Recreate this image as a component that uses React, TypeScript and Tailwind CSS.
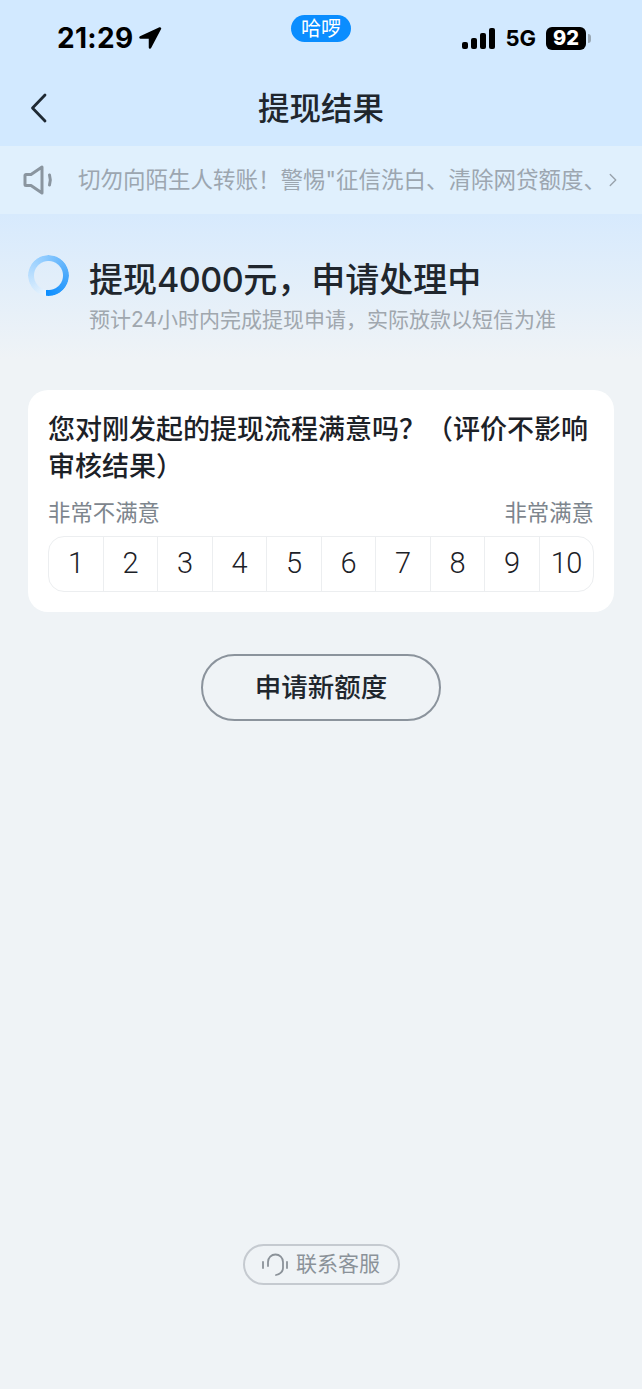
import { ChevronRight } from "lucide-react";

const SCORES = [1, 2, 3, 4, 5, 6, 7, 8, 9, 10];

const StatusBar = () => (
  <div className="grid h-[76px] grid-cols-3 px-[57px]">
    <div className="flex items-center gap-[6px] font-['Inter'] text-[28px] leading-none font-bold tracking-[0.3px] text-black">
      <span>21:29</span>
      <svg width="24" height="24" viewBox="0 0 24 24" className="-ml-[1px]">
        <path d="M22 2.5 2.5 11.5h9.5v10z" fill="#000" stroke="#000" strokeWidth="2.5" strokeLinejoin="round" />
      </svg>
    </div>
    <div className="flex justify-center pt-[15px]">
      <span className="flex h-[27px] w-[60px] items-center justify-center rounded-full bg-[#0a8dff] text-[20px] leading-none text-white">
        哈啰
      </span>
    </div>
    <div className="-mr-[6px] flex items-center justify-end">
      <svg width="33" height="21" viewBox="0 0 33 21" fill="#000">
        <rect x="0" y="14" width="6" height="7" rx="2" />
        <rect x="9" y="10" width="6" height="11" rx="2" />
        <rect x="18" y="5" width="6" height="16" rx="2" />
        <rect x="27" y="0" width="6" height="21" rx="2" />
      </svg>
      <span className="ml-[10px] font-['Inter'] text-[22px] leading-none font-bold text-black">5G</span>
      <span className="ml-[10px] flex h-[23px] w-[40px] items-center justify-center rounded-[6px] bg-black font-['Inter'] text-[20px] leading-none font-extrabold text-white">
        92
      </span>
      <span className="ml-[2px] h-[9px] w-[3px] rounded-r-full bg-[#9aa8b5]" />
    </div>
  </div>
);

const NavBar = () => (
  <div className="relative flex h-[70px] items-center justify-center">
    <svg width="20" height="32" viewBox="0 0 20 32" fill="none" className="absolute top-[16px] left-[29px]">
      <path d="M16 3 3.500 16 16 29" stroke="#1f2933" strokeWidth="2.8" strokeLinecap="round" strokeLinejoin="round" />
    </svg>
    <span className="pb-[5px] text-[31.500px] leading-none font-medium text-[#20262d]">提现结果</span>
  </div>
);

const Notice = () => (
  <div className="flex h-[68px] items-center bg-[#e0f0fd] pl-[23px]">
    <svg width="30" height="30" viewBox="0 0 30 30" fill="none" className="shrink-0">
      <path
        d="M3 9.500h5l11-7.500v26l-11-7.500H3a1 1 0 0 1-1-1v-9a1 1 0 0 1 1-1z"
        stroke="#8a959f"
        strokeWidth="3"
        strokeLinejoin="round"
      />
      <path d="M26.500 10c1 3 1 7 0 10" stroke="#8a959f" strokeWidth="3" strokeLinecap="round" />
    </svg>
    <span className="ml-[25px] text-[22.500px] leading-none whitespace-nowrap text-[#9ca6b0]">
      切勿向陌生人转账！警惕"征信洗白、清除网贷额度、
    </span>
    <ChevronRight size={22} strokeWidth={1.5} className="-ml-[4px] shrink-0 text-[#98a2ac]" />
  </div>
);

const ResultHead = () => (
  <div className="flex items-start px-[28px] pt-[41px]">
    <div className="h-[41px] w-[41px] shrink-0 rounded-full bg-[conic-gradient(from_188deg,#eaf4fd,#8ccaff_45%,#4fabfb_70%,#0a8dff)] [mask:radial-gradient(circle,transparent_14px,#000_15px)]" />
    <div className="ml-[20px] flex flex-col">
      <span className="pt-[3px] text-[34px] leading-[44px] font-medium whitespace-nowrap text-[#20262d]">
        提现<span className="tracking-[-0.5px]">4000</span>元，申请处理中
      </span>
      <span className="mt-[2px] text-[21px] leading-[32px] whitespace-nowrap text-[#a0a7ae]">预计24小时内完成提现申请，实际放款以短信为准</span>
    </div>
  </div>
);

const SurveyCard = () => (
  <div className="mx-[28px] mt-[54px] rounded-[20px] bg-white px-[20px] pt-[21px] pb-[20px]">
    <p className="text-[27px] leading-[37px] font-medium text-[#1c2127]">
      您对刚发起的提现流程满意吗？（评价不影响审核结果）
    </p>
    <div className="mt-[12px] flex justify-between text-[22.400px] leading-[32px] text-[#7d858d]">
      <span>非常不满意</span>
      <span>非常满意</span>
    </div>
    <div className="mt-[7px] flex h-[56px] rounded-[16px] border border-[#eceef0]">
      {SCORES.map((n) => (
        <div
          key={n}
          className="flex flex-1 items-center justify-center border-l border-[#eceef0] font-['Roboto'] text-[29px] font-light tracking-[-0.5px] text-[#1c2127] first:border-l-0"
        >
          {n}
        </div>
      ))}
    </div>
  </div>
);

export default function App() {
  return (
    <div className="flex min-h-[1389px] w-full flex-col bg-[#eff3f6] font-['Inter','Noto_Sans_CJK_SC',sans-serif]">
      <div className="bg-[#d2e9ff]">
        <StatusBar />
        <NavBar />
      </div>
      <Notice />
      <div className="flex flex-1 flex-col bg-[linear-gradient(180deg,#d7eafd_0,#eff3f6_145px)]">
        <ResultHead />
        <SurveyCard />
        <button className="mx-auto mt-[42px] flex h-[67px] w-[240px] items-center justify-center rounded-full border-2 border-[#8b939c] text-[26.500px] leading-none font-medium text-[#20262d]">
          申请新额度
        </button>
        <div className="mt-auto mb-[104px] flex justify-center">
          <div className="flex h-[41px] w-[157px] items-center justify-center gap-[8px] rounded-full border-2 border-[#c5cad0] text-[21px] leading-none text-[#8b9299]">
            <svg width="26" height="24" viewBox="0 0 26 24" fill="none" stroke="#8b9299" strokeWidth="1.800" strokeLinecap="round">
              <path d="M1 9v6" />
              <path d="M25 9v6" />
              <path d="M6 13V9a7.500 7.500 0 0 1 15 0v6c0 4-3 6-7 7" />
            </svg>
            <span className="pb-[3px]">联系客服</span>
          </div>
        </div>
      </div>
    </div>
  );
}
